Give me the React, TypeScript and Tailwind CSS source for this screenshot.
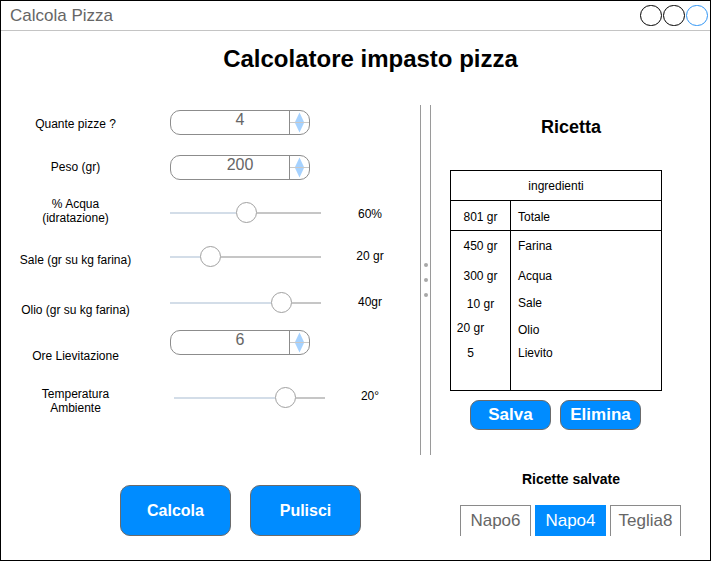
import React from "react";

function Spinner({ value }: { value: string }) {
  return (
    <div className="flex h-[25px] w-[140px] overflow-hidden rounded-[10px] border border-[#8c8c8c] bg-white">
      <div className="w-[119px] pl-[20px] text-center text-[16px] leading-[18px] text-[#666]">{value}</div>
      <div className="w-[20px] border-l border-[#8c8c8c]">
        <svg width="19" height="23" viewBox="0 0 19 23" className="block">
          <line x1="0" y1="11.5" x2="19" y2="11.5" stroke="#c8c8c8" strokeWidth="1" />
          <path d="M9.5 1.5 L14 11 L5 11 Z" fill="#a6d2ff" />
          <path d="M9.5 21.5 L14 12 L5 12 Z" fill="#a6d2ff" />
        </svg>
      </div>
    </div>
  );
}

function Slider({ left }: { left: string }) {
  return (
    <div className="flex h-[21px] w-[151px] items-center">
      <div className={"h-[2px] shrink-0 bg-[#d3dde8] " + left} />
      <div className="h-[21px] w-[21px] shrink-0 rounded-full border border-[#a0a0a0] bg-white" />
      <div className="h-[2px] flex-1 bg-[#c6c6c6]" />
    </div>
  );
}

export default function App() {
  return (
    <div className="relative h-[561px] w-[711px] overflow-hidden border border-black bg-white font-['Liberation_Sans',Arial,sans-serif] text-black">
      {/* title bar */}
      <div className="flex h-[30px] items-center justify-between border-b border-[#c4c4c4] pl-[9px] pr-[2px]">
        <span className="text-[17px] leading-[20px] text-[#666]">Calcola Pizza</span>
        <div className="flex gap-[1px]">
          <div className="h-[21px] w-[22px] rounded-full border-[1.5px] border-black" />
          <div className="h-[21px] w-[22px] rounded-full border-[1.5px] border-black" />
          <div className="h-[21px] w-[22px] rounded-full border-[1.5px] border-[#2f95f5]" />
        </div>
      </div>

      {/* heading */}
      <div className="h-[74px] pl-[30px] pt-[14px] text-center text-[24px] font-bold leading-[28px]">
        Calcolatore impasto pizza
      </div>

      <div className="flex items-start">
        {/* left column */}
        <div className="w-[414px] text-[12px] leading-[14px]">
          <div className="flex h-[45px]">
            <div className="mt-[12px] w-[149px] text-center">Quante pizze ?</div>
            <div className="ml-[20px] mt-[5px]">
              <Spinner value="4" />
            </div>
          </div>
          <div className="flex h-[45px]">
            <div className="mt-[10px] w-[149px] text-center">Peso (gr)</div>
            <div className="ml-[20px] mt-[5px]">
              <Spinner value="200" />
            </div>
          </div>
          <div className="flex h-[45px]">
            <div className="mt-[2px] w-[149px] text-center">
              % Acqua
              <br />
              (idratazione)
            </div>
            <div className="ml-[20px] mt-[7px]">
              <Slider left="w-[66px]" />
            </div>
            <div className="ml-[9px] mt-[12px] w-[80px] text-center">60%</div>
          </div>
          <div className="flex h-[45px]">
            <div className="mt-[13px] w-[149px] text-center">Sale (gr su kg farina)</div>
            <div className="ml-[20px] mt-[6px]">
              <Slider left="w-[30px]" />
            </div>
            <div className="ml-[9px] mt-[9px] w-[80px] text-center">20 gr</div>
          </div>
          <div className="flex h-[40px]">
            <div className="mt-[18px] w-[149px] text-center">Olio (gr su kg farina)</div>
            <div className="ml-[20px] mt-[7px]">
              <Slider left="w-[101px]" />
            </div>
            <div className="ml-[9px] mt-[10px] w-[80px] text-center">40gr</div>
          </div>
          <div className="flex h-[50px]">
            <div className="mt-[24px] w-[149px] text-center">Ore Lievitazione</div>
            <div className="ml-[20px] mt-[5px]">
              <Spinner value="6" />
            </div>
          </div>
          <div className="flex h-[45px]">
            <div className="mt-[12px] w-[149px] text-center">
              Temperatura
              <br />
              Ambiente
            </div>
            <div className="ml-[24px] mt-[12px]">
              <Slider left="w-[101px]" />
            </div>
            <div className="ml-[5px] mt-[14px] w-[80px] text-center">20°</div>
          </div>

          <div className="ml-[119px] mt-[65px] flex gap-[19px]">
            <button className="h-[51px] w-[111px] rounded-[10px] border border-[#6b6b6b] bg-[#008cff] text-[16px] font-bold text-white">
              Calcola
            </button>
            <button className="h-[51px] w-[111px] rounded-[10px] border border-[#6b6b6b] bg-[#008cff] text-[16px] font-bold text-white">
              Pulisci
            </button>
          </div>
        </div>

        {/* divider */}
        <div className="ml-[5px] flex h-[350px] w-[11px] flex-col items-center gap-[11px] border-x border-[#9a9a9a] pt-[158px]">
          <div className="h-[4px] w-[4px] rounded-full bg-[#a8a8a8]" />
          <div className="h-[4px] w-[4px] rounded-full bg-[#a8a8a8]" />
          <div className="h-[4px] w-[4px] rounded-full bg-[#a8a8a8]" />
        </div>

        {/* right column */}
        <div className="ml-[6px] flex w-[268px] flex-col">
          <div className="mt-[12px] text-center text-[18px] font-bold leading-[21px]">Ricetta</div>

          <div className="ml-[13px] mt-[32px] w-[212px] border border-black text-[12px] leading-[14px]">
            <div className="flex h-[30px] items-center justify-center border-b border-black">ingredienti</div>
            <div className="flex h-[30px] border-b border-black">
              <div className="flex w-[60px] items-center justify-center border-r border-black pt-[2px]">801 gr</div>
              <div className="flex items-center pl-[7px] pt-[2px]">Totale</div>
            </div>
            <div className="flex h-[159px]">
              <div className="flex w-[60px] flex-col items-center border-r border-black">
                <div className="mt-[8px]">450 gr</div>
                <div className="mt-[16px]">300 gr</div>
                <div className="mt-[14px]">10 gr</div>
                <div className="mr-[20px] mt-[10px]">20 gr</div>
                <div className="mr-[20px] mt-[11px]">5</div>
              </div>
              <div className="flex flex-col pl-[7px]">
                <div className="mt-[8px]">Farina</div>
                <div className="mt-[16px]">Acqua</div>
                <div className="mt-[13px]">Sale</div>
                <div className="mt-[13px]">Olio</div>
                <div className="mt-[9px]">Lievito</div>
              </div>
            </div>
          </div>

          <div className="ml-[33px] mt-[9px] flex gap-[9px]">
            <button className="h-[30px] w-[81px] rounded-[9px] border border-[#6b6b6b] bg-[#008cff] text-[17px] font-bold text-white">
              Salva
            </button>
            <button className="h-[30px] w-[81px] rounded-[9px] border border-[#6b6b6b] bg-[#008cff] text-[17px] font-bold text-white">
              Elimina
            </button>
          </div>

          <div className="mt-[41px] text-center text-[14px] font-bold leading-[16px]">Ricette salvate</div>

          <div className="ml-[23px] mt-[18px] flex gap-[4px]">
            <div className="flex h-[31px] w-[71px] items-center justify-center border border-b-0 border-[#8a8a8a] text-[17px] text-[#666]">
              Napo6
            </div>
            <div className="flex h-[31px] w-[71px] items-center justify-center border border-b-0 border-[#008cff] bg-[#008cff] text-[17px] text-white">
              Napo4
            </div>
            <div className="flex h-[31px] w-[71px] items-center justify-center border border-b-0 border-[#8a8a8a] text-[17px] text-[#666]">
              Teglia8
            </div>
          </div>
        </div>
      </div>
    </div>
  );
}
